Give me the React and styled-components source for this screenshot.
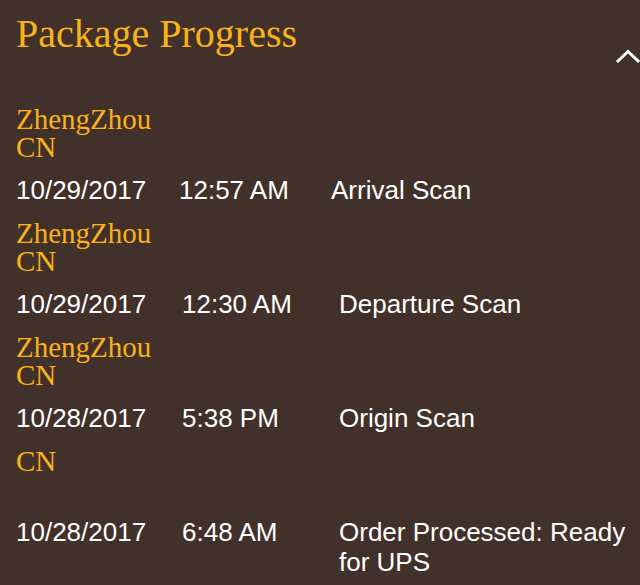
import React from "react";
import styled, { createGlobalStyle } from "styled-components";

const Global = createGlobalStyle`
  html, body {
    margin: 0;
    padding: 0;
    background: #42302a;
  }
  body {
    font-family: "Liberation Sans", Arial, sans-serif;
  }
`;

const Panel = styled.section`
  width: 640px;
  min-height: 585px;
  background: #42302a;
  padding: 10px 0 0 16px;
  box-sizing: border-box;
  overflow: hidden;
`;

const Header = styled.header`
  display: flex;
  justify-content: space-between;
  align-items: flex-start;
  margin-bottom: 40px;
`;

const Title = styled.h2`
  margin: 0;
  font-family: "Liberation Serif", "Times New Roman", serif;
  font-weight: 400;
  font-size: 40px;
  line-height: 48px;
  color: #f9b21a;
`;

const Toggle = styled.button`
  border: 0;
  background: none;
  padding: 0;
  margin: 37px -2px 0 0;
  width: 26px;
  height: 18px;
  display: block;
  cursor: pointer;
`;

const List = styled.ol`
  list-style: none;
  margin: 0;
  padding: 0;
`;

const Entry = styled.li`
  display: flex;
  flex-direction: column;
  gap: 14px;
  margin-bottom: 14px;
`;

const Location = styled.div`
  font-family: "Liberation Serif", "Times New Roman", serif;
  font-size: 29px;
  line-height: 28px;
  min-height: 56px;
  color: #f9b21a;
`;

const Row = styled.div`
  display: grid;
  grid-template-columns: ${(p) => p.$cols};
  font-size: 26px;
  line-height: 30px;
  color: #ffffff;
`;

const Cell = styled.span`
  display: block;
`;

const events = [
  { loc: ["ZhengZhou", "CN"], date: "10/29/2017", time: "12:57 AM", desc: "Arrival Scan", cols: "163px 152px 1fr" },
  { loc: ["ZhengZhou", "CN"], date: "10/29/2017", time: "12:30 AM", desc: "Departure Scan", cols: "166px 157px 1fr" },
  { loc: ["ZhengZhou", "CN"], date: "10/28/2017", time: "5:38 PM", desc: "Origin Scan", cols: "166px 157px 1fr" },
  { loc: ["CN"], date: "10/28/2017", time: "6:48 AM", desc: "Order Processed: Ready for UPS", cols: "166px 157px 1fr" },
];

export default function App() {
  return (
    <>
      <Global />
      <Panel>
        <Header>
          <Title>Package Progress</Title>
          <Toggle aria-label="Collapse">
            <svg width="26" height="18" viewBox="0 0 26 18">
              <polyline
                points="2,14 12,4.5 22,14"
                fill="none"
                stroke="#ffffff"
                strokeWidth="3"
                strokeLinecap="square"
              />
            </svg>
          </Toggle>
        </Header>
        <List>
          {events.map((e, i) => (
            <Entry key={i}>
              <Location>
                {e.loc.map((l, j) => (
                  <div key={j}>{l}</div>
                ))}
              </Location>
              <Row $cols={e.cols}>
                <Cell>{e.date}</Cell>
                <Cell>{e.time}</Cell>
                <Cell>{e.desc}</Cell>
              </Row>
            </Entry>
          ))}
        </List>
      </Panel>
    </>
  );
}
